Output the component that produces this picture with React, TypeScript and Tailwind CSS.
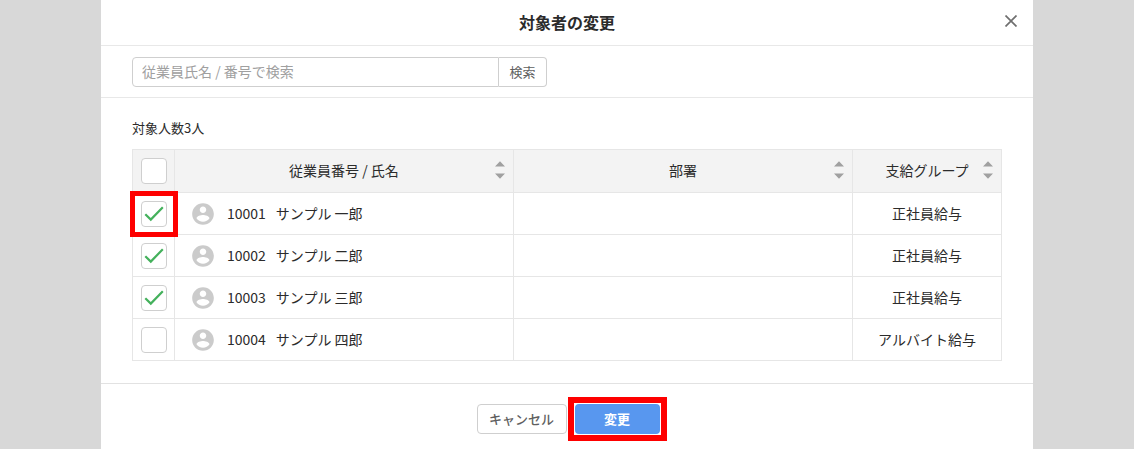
import { useState } from "react";

const employees = [
  { id: "10001", name: "サンプル 一郎", department: "", group: "正社員給与", selected: true, marked: true },
  { id: "10002", name: "サンプル 二郎", department: "", group: "正社員給与", selected: true, marked: false },
  { id: "10003", name: "サンプル 三郎", department: "", group: "正社員給与", selected: true, marked: false },
  { id: "10004", name: "サンプル 四郎", department: "", group: "アルバイト給与", selected: false, marked: false },
];

const columns = ["従業員番号 / 氏名", "部署", "支給グループ"];

function CloseIcon() {
  return (
    <svg width="12" height="12" viewBox="0 0 12 12" fill="none" stroke="#6f6f6f" strokeWidth="1.7">
      <path d="M0.5 0.5 11.5 11.5M11.5 0.5 0.5 11.5" />
    </svg>
  );
}

function SortIcon() {
  return (
    <svg width="10" height="18" viewBox="0 0 10 18" fill="#a0a0a0">
      <path d="M5 0.3 10 5.6H0ZM5 17.7 10 12.4H0Z" />
    </svg>
  );
}

function AvatarIcon() {
  return (
    <svg className="shrink-0" width="26" height="26" viewBox="0 0 24 24" fill="#cbcbcb">
      <path d="M12 2C6.48 2 2 6.48 2 12s4.48 10 10 10 10-4.48 10-10S17.52 2 12 2zm0 3c1.66 0 3 1.34 3 3s-1.34 3-3 3-3-1.34-3-3 1.34-3 3-3zm0 14.2c-2.5 0-4.71-1.28-6-3.22.03-1.99 4-3.08 6-3.08 1.99 0 5.97 1.09 6 3.08-1.29 1.94-3.5 3.22-6 3.22z" />
    </svg>
  );
}

type CheckboxProps = {
  label: string;
  checked: boolean;
  marked?: boolean;
  onChange: () => void;
};

function Checkbox({ label, checked, marked, onChange }: CheckboxProps) {
  return (
    <label className="relative mx-auto block size-[26px]">
      <input
        type="checkbox"
        aria-label={label}
        checked={checked}
        onChange={onChange}
        className="block size-[26px] appearance-none rounded border border-[#cfcfcf] bg-white"
      />
      {checked && (
        <svg
          className="pointer-events-none absolute inset-0"
          width="26"
          height="26"
          viewBox="0 0 26 26"
          fill="none"
          stroke="#44b15c"
          strokeWidth="2.2"
        >
          <path d="M4.3 13.2 9.8 18.6 21.8 6.2" />
        </svg>
      )}
      {marked && (
        <span className="pointer-events-none absolute -inset-x-[11px] -inset-y-[10px] border-[5px] border-[#fe0000]" />
      )}
    </label>
  );
}

export default function App() {
  const [query, setQuery] = useState("");
  const [selected, setSelected] = useState(employees.filter((e) => e.selected).map((e) => e.id));

  const allSelected = selected.length === employees.length;

  const toggle = (id: string) =>
    setSelected(selected.includes(id) ? selected.filter((s) => s !== id) : [...selected, id]);

  return (
    <div className="min-h-screen bg-[#d8d8d8] font-['Noto_Sans_CJK_JP',sans-serif] text-sm text-[#2b2b2b]">
      <main className="mx-auto min-h-screen w-full max-w-[932px] bg-white">
        {/* Header */}
        <header className="grid h-[46px] grid-cols-[1fr_auto_1fr] items-center border-b border-[#e8e8e8] px-4">
          <h1 className="col-start-2 pb-0.5 text-base font-bold">対象者の変更</h1>
          <button type="button" aria-label="閉じる" className="justify-self-end pb-1">
            <CloseIcon />
          </button>
        </header>

        {/* Search */}
        <form
          className="flex border-b border-[#e8e8e8] px-[31px] pt-[11px] pb-[10px]"
          onSubmit={(e) => e.preventDefault()}
        >
          <input
            type="text"
            aria-label="従業員氏名 / 番号で検索"
            placeholder="従業員氏名 / 番号で検索"
            value={query}
            onChange={(e) => setQuery(e.target.value)}
            className="h-[30px] w-[367px] min-w-0 rounded-l border border-[#cfcfcf] px-[9px] pb-0.5 placeholder:text-[#a0a0a0]"
          />
          <button
            type="submit"
            className="h-[30px] w-12 shrink-0 rounded-r border border-l-0 border-[#cfcfcf] text-[13px] text-[#5f5f5f]"
          >
            検索
          </button>
        </form>

        {/* Employees */}
        <section className="px-[31px] pt-5 pb-[22px]">
          <p className="mb-[11px] text-[13px] leading-5">対象人数{selected.length}人</p>
          <table className="w-full table-fixed border-collapse">
            <thead>
              <tr className="h-[43px] bg-[#f3f3f3]">
                <th className="w-[42px] border border-[#e6e6e6] p-0">
                  <Checkbox
                    label="すべて選択"
                    checked={allSelected}
                    onChange={() => setSelected(allSelected ? [] : employees.map((e) => e.id))}
                  />
                </th>
                {columns.map((column) => (
                  <th key={column} className="border border-[#e6e6e6] p-0 pb-0.5 font-normal last:w-[149px]">
                    <div className="grid grid-cols-[1fr_auto_1fr] items-center">
                      <span className="col-start-2">{column}</span>
                      <button type="button" aria-label={`${column}で並べ替え`} className="justify-self-end pr-2">
                        <SortIcon />
                      </button>
                    </div>
                  </th>
                ))}
              </tr>
            </thead>
            <tbody>
              {employees.map((employee) => (
                <tr key={employee.id} className="h-[42px]">
                  <td className="border border-[#e6e6e6] p-0">
                    <Checkbox
                      label={employee.name}
                      checked={selected.includes(employee.id)}
                      marked={employee.marked}
                      onChange={() => toggle(employee.id)}
                    />
                  </td>
                  <td className="border border-[#e6e6e6] p-0">
                    <div className="flex items-center pl-[15px]">
                      <AvatarIcon />
                      <span className="ml-[11px] pb-0.5">{employee.id}</span>
                      <span className="ml-[10px] pb-0.5">{employee.name}</span>
                    </div>
                  </td>
                  <td className="border border-[#e6e6e6] p-0 pb-0.5 text-center">{employee.department}</td>
                  <td className="border border-[#e6e6e6] p-0 pb-0.5 text-center">{employee.group}</td>
                </tr>
              ))}
            </tbody>
          </table>
        </section>

        {/* Footer */}
        <footer className="flex justify-center gap-2 border-t border-[#e2e2e2] py-5 pl-0.5">
          <button
            type="button"
            className="h-[30px] w-[90px] rounded border border-[#cfcfcf] text-[13px] font-medium text-[#5f5f5f]"
          >
            キャンセル
          </button>
          <div className="relative">
            <button
              type="button"
              className="block h-[30px] w-[85px] rounded bg-[#5897ef] text-[13px] font-bold text-white"
            >
              変更
            </button>
            <span className="pointer-events-none absolute -inset-[7px] border-[6px] border-[#fe0000]" />
          </div>
        </footer>
      </main>
    </div>
  );
}
